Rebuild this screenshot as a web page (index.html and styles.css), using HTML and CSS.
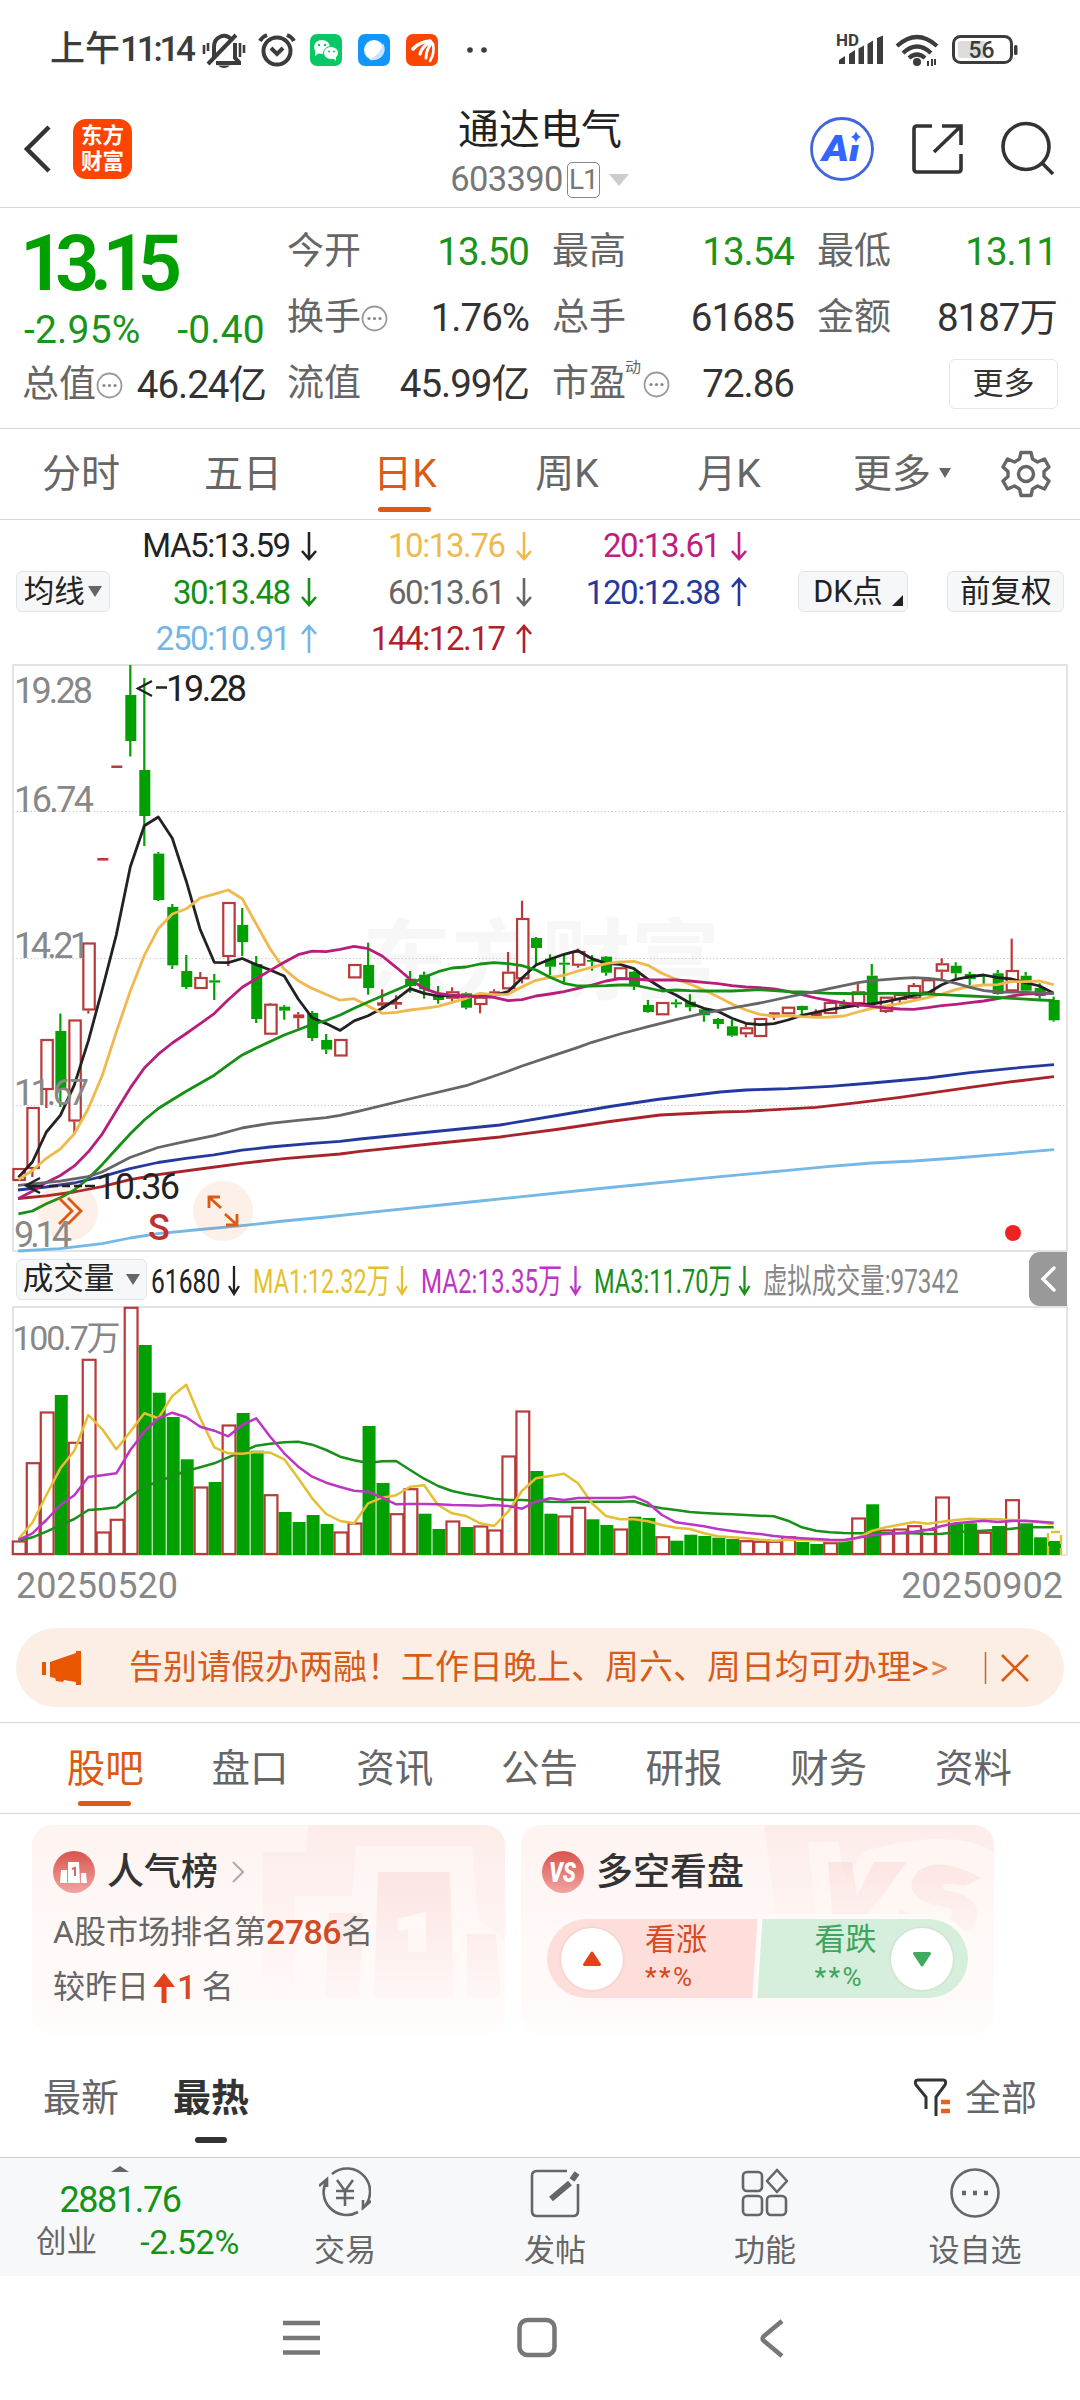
FILE: index.html
```html
<!DOCTYPE html>
<html lang="zh-CN">
<head>
<meta charset="utf-8">
<title>通达电气 603390</title>
<link rel="stylesheet" href="styles.css">
</head>
<body>
<div class="status">
  <span class="clock">上午<b>11:14</b></span>
  <svg class="st-left" width="300" height="60" viewBox="200 20 300 60">
    <g fill="none" stroke="#3c3c3c" stroke-width="4" stroke-linecap="butt">
      <path d="M214 57V47a10 11 0 0 1 17-8M235 43v15l4 4v1h-23M208 64L236 35"/>
      <path d="M204 45v9M208 43v8M240 43v14M244 45v8" stroke-width="2.6"/>
      <circle cx="277" cy="51" r="13.5"/>
      <path d="M271 48l6 6 6-6M260 41q2-4 7-6M294 41q-2-4-7-6" />
    </g>
    <path d="M218 65.500h12q-6 5-12 0z" fill="#3c3c3c"/>
    <rect x="310" y="34" width="32" height="32" rx="7" fill="#07c865"/>
    <ellipse cx="322" cy="47" rx="8" ry="7" fill="#fff"/><ellipse cx="331" cy="53" rx="7.500" ry="6.500" fill="#fff" stroke="#07c865"/>
    <path d="M315 51l0 5 4-3zM333 58l3 3 0-5z" fill="#fff"/>
    <g fill="#07c865"><circle cx="319" cy="45" r="1.200"/><circle cx="325" cy="45" r="1.200"/><circle cx="329" cy="51.500" r="1"/><circle cx="334" cy="51.500" r="1"/></g>
    <rect x="358" y="34" width="32" height="32" rx="7" fill="#1296fb"/>
    <circle cx="374" cy="50" r="10" fill="#fff"/><path d="M383 43q4 8-1 13-5 5-13 4 12-6 14-17z" fill="#c4e4ff"/>
    <rect x="406" y="34" width="32" height="32" rx="7" fill="#fd4503"/>
    <g fill="none" stroke="#fff" stroke-linecap="round"><path d="M413 49q6-7 17-8" stroke-width="3.600"/><path d="M420 54q2-8 11-12" stroke-width="3.200"/><path d="M426 58q0-9 6-15" stroke-width="3"/><path d="M430 61q5-8 3-17" stroke-width="2.600"/></g>
    <circle cx="470" cy="50" r="2.800" fill="#3c3c3c"/><circle cx="484" cy="50" r="2.800" fill="#3c3c3c"/>
  </svg>
  <svg class="st-right" width="190" height="60" viewBox="830 20 190 60">
    <text x="836" y="46" class="hd" textLength="23" lengthAdjust="spacingAndGlyphs">HD</text>
    <g fill="#3c3c3c"><path d="M839 60l6-4v8h-6zM849 54l6-4v14h-6zM858.500 48.500l5.500-3v18.500h-5.500zM867.500 44l5.500-3.500V64h-5.500zM877 38l6-2.500V64h-6z"/>
    <circle cx="917" cy="62" r="4"/></g>
    <g fill="none" stroke="#3c3c3c" stroke-width="4.200"><path d="M897 46q20-18 40 0M903 53q14-13 28 0M909 58q8-7 16 0"/><path d="M928 61v5M932 59v7M935 59v6" stroke-width="2"/></g>
    <rect x="953.500" y="36.500" width="58" height="26" rx="7" fill="none" stroke="#3c3c3c" stroke-width="3"/>
    <rect x="958" y="41" width="28" height="17" rx="3" fill="#dcdcdc"/><rect x="1014" y="45" width="3.500" height="10" rx="1.500" fill="#3c3c3c"/>
    <text x="968.500" y="58" class="batt" textLength="26" lengthAdjust="spacingAndGlyphs">56</text>
  </svg>
</div>

<header class="header">
  <svg width="27" height="50" viewBox="0 0 27 50" class="back"><path d="M25 3L3 25l22 22" fill="none" stroke="#333" stroke-width="4.500"/></svg>
  <div class="logo"><span>东方</span><span>财富</span></div>
  <div class="title">
    <h1>通达电气</h1>
    <div class="code"><span>603390</span><i>L1</i><u></u></div>
  </div>
  <svg class="tools" width="250" height="70" viewBox="810 114 250 70">
    <circle cx="842" cy="149" r="30.500" fill="none" stroke="#4065dc" stroke-width="2.800"/>
    <text x="822" y="161" class="ai" textLength="38" lengthAdjust="spacingAndGlyphs">Ai</text>
    <path d="M849 129h14v16h-14z" fill="#fff"/>
    <path d="M856 131q1 4.500 5 6-4 1-5 6-1-5-5-6 4-1.500 5-6z" fill="#3366ff"/>
    <g fill="none" stroke="#333" stroke-width="3.600"><path d="M932 126h-15q-3 0-3 3v40q0 3 3 3h41q3 0 3-3v-15M942 126h19v19M961 126l-27 26"/>
    <circle cx="1026" cy="146.500" r="23"/><path d="M1042 163l11 11"/></g>
  </svg>
</header>

<section class="quote">
  <div class="main">
    <div class="price">13.15</div>
    <div class="pair change down"><span>-2.95%</span><span>-0.40</span></div>
    <div class="pair"><label>总值</label><svg class="more-dot"><use href="#dots"/></svg><span>46.24亿</span></div>
  </div>
  <div class="col"><div><label>今开</label><span class="down">13.50</span></div><div><label>换手</label><svg class="more-dot"><use href="#dots"/></svg><span>1.76%</span></div><div><label>流值</label><span>45.99亿</span></div></div>
  <div class="col"><div><label>最高</label><span class="down">13.54</span></div><div><label>总手</label><span>61685</span></div><div><label>市盈<sup>动</sup></label><svg class="more-dot"><use href="#dots"/></svg><span>72.86</span></div></div>
  <div class="col"><div><label>最低</label><span class="down">13.11</span></div><div><label>金额</label><span>8187万</span></div><div class="end"><button class="more">更多</button></div></div>
</section>
<svg class="defs"><defs><g id="dots"><circle cx="13.500" cy="13.500" r="12" fill="none" stroke="#999" stroke-width="1.800"/><circle cx="8" cy="13.500" r="1.600" fill="#888"/><circle cx="13.500" cy="13.500" r="1.600" fill="#888"/><circle cx="19" cy="13.500" r="1.600" fill="#888"/></g></defs></svg>

<nav class="periods">
  <a>分时</a><a>五日</a><a class="on">日K</a><a>周K</a><a>月K</a><a>更多<i class="tri"></i></a>
  <svg width="108" height="60" viewBox="-54 -30 108 60"><path id="gear" fill="none" stroke="#666" stroke-width="3.400" stroke-linejoin="round" d="M-5-21.500h10l1.500 6.500 5 3 7-3 4.500 8-5 4.500v5l5 4.500-4.500 8-7-3-5 3-1.500 6.500h-10l-1.500-6.500-5-3-7 3-4.500-8 5-4.500v-5l-5-4.500 4.500-8 7 3 5-3z"/><circle r="7.500" fill="none" stroke="#666" stroke-width="3.400"/></svg>
</nav>

<section class="averages">
  <button class="chip line">均线<i class="tri"></i></button>
  <div class="ma-grid">
    <span class="c5">MA5:13.59<svg class="arr"><use href="#dn"/></svg></span><span class="c10">10:13.76<svg class="arr"><use href="#dn"/></svg></span><span class="c20">20:13.61<svg class="arr"><use href="#dn"/></svg></span>
    <span class="c30">30:13.48<svg class="arr"><use href="#dn"/></svg></span><span class="c60">60:13.61<svg class="arr"><use href="#dn"/></svg></span><span class="c120">120:12.38<svg class="arr"><use href="#up"/></svg></span>
    <span class="c250">250:10.91<svg class="arr"><use href="#up"/></svg></span><span class="c144">144:12.17<svg class="arr"><use href="#up"/></svg></span>
  </div>
  <button class="chip dk">DK点<i></i></button>
  <button class="chip fq">前复权</button>
</section>
<svg class="defs"><defs><path id="dn" d="M8 1v27M1 20l7 8 7-8" fill="none" stroke="currentColor" stroke-width="2.600"/><path id="up" d="M8 29V2M1 10l7-8 7 8" fill="none" stroke="currentColor" stroke-width="2.600"/></defs></svg>

<svg class="kline" width="1080" height="588" viewBox="0 664 1080 588">
  <text class="watermark" x="362" y="992" textLength="358" lengthAdjust="spacingAndGlyphs">东方财富</text>
  <path d="M13 811.500H1067M13 958.500H1067M13 1105.500H1067" stroke="#ccc" stroke-dasharray="1.500 2"/>
  <path d="M13 1251V665H1067V1251z" fill="none" stroke="#e3e3e3" stroke-width="2"/>
  <g id="candles"></g>
  <g id="averages" fill="none" stroke-width="2.800" stroke-linejoin="round"></g>
  <g fill="#ee6a20" fill-opacity=".1"><circle cx="68" cy="1211" r="30"/><circle cx="223" cy="1211" r="30"/></g>
  <g fill="none" stroke="#dc5a14" stroke-width="2.800"><path d="M59 1198l13 13-13 13M68 1198l13 13-13 13M209 1208v-11h11M210 1198l11 10M237 1214v11h-11M236 1224l-11-10"/></g>
  <text x="148" y="1240" class="sell">S</text>
  <circle cx="1013" cy="1233" r="8" fill="#ee2222"/>
  <g class="axis">
    <text x="14" y="702.500" textLength="79">19.28</text><text x="14" y="812" textLength="80">16.74</text><text x="14" y="958" textLength="76">14.21</text><text x="14" y="1105" textLength="75">11.67</text><text x="14" y="1247" textLength="58">9.14</text>
  </g>
  <g class="note">
    <path d="M152 681l-14 7.500 14 7.500M156 687.500h11M40 1178l-14 7.500 14 7.500M27 1186h16M49 1186h9M62 1186h8M74 1186h8M85 1186h10" fill="none" stroke="#222" stroke-width="2.400"/>
    <text x="166" y="701" textLength="81">19.28</text><text x="96" y="1199" textLength="84">10.36</text>
  </g>
</svg>

<section class="vol-head">
  <button class="chip vol">成交量<i class="tri"></i></button>
  <svg width="850" height="54" viewBox="150 1252 850 54" class="vol-legend">
    <text transform="translate(151 1292.500) scale(.725 1)" fill="#222">61680</text>
    <text transform="translate(253 1292.500) scale(.69 1)" fill="#e7c02f">MA1:12.32万</text>
    <text transform="translate(421 1292.500) scale(.71 1)" fill="#bd35c4">MA2:13.35万</text>
    <text transform="translate(594 1292.500) scale(.695 1)" fill="#1a8f1a">MA3:11.70万</text>
    <text transform="translate(763 1292.500) scale(.716 1)" fill="#888">虚拟成交量:97342</text>
    <g fill="none" stroke-width="2.300"><path d="M234 1266v28M229 1286l5 8 5-8" stroke="#222"/><path d="M402 1266v28M397 1286l5 8 5-8" stroke="#e7c02f"/><path d="M575.500 1266v28M570.500 1286l5 8 5-8" stroke="#bd35c4"/><path d="M744.500 1266v28M739.500 1286l5 8 5-8" stroke="#1a8f1a"/></g>
  </svg>
  <div class="toggle"><svg width="18" height="26" viewBox="0 0 18 26"><path d="M15 2L4 13l11 11" fill="none" stroke="#fff" stroke-width="3.400" stroke-linecap="round"/></svg></div>
</section>

<svg class="volume" width="1080" height="250" viewBox="0 1306 1080 250">
  <path d="M13 1555V1307H1067V1555z" fill="none" stroke="#e3e3e3" stroke-width="2"/>
  <g class="axis"><text x="12.500" y="1350" textLength="108">100.7万</text></g>
  <g id="bars"></g>
  <g id="volume-averages" fill="none" stroke-width="2.500" stroke-linejoin="round"></g>
</svg>
<div class="dates"><span>20250520</span><span>20250902</span></div>

<div class="banner">
  <svg width="40" height="36" viewBox="0 0 40 36"><path d="M0 12h4v13H0zM8 12l26-9V1h5v34h-5v-3l-12-2-1 2-7-1-1-3-5-1z" fill="#e85600"/></svg>
  <p>告别请假办两融！工作日晚上、周六、周日均可办理<b>&gt;</b><em>&gt;</em></p>
  <svg width="46" height="34" viewBox="0 0 46 34"><path d="M1.500 1v32" stroke="#d06020" stroke-width="1.500"/><path d="M18 4l26 26M44 4L18 30" stroke="#dc5a14" stroke-width="2.600"/></svg>
</div>

<nav class="tabs"><a class="on">股吧</a><a>盘口</a><a>资讯</a><a>公告</a><a>研报</a><a>财务</a><a>资料</a></nav>

<section class="cards">
  <article class="card">
    <svg class="art" width="473" height="209" viewBox="32 1825 473 209">
      <defs><linearGradient id="fade" x2="0" y2="1"><stop stop-color="#f7cfcc" stop-opacity=".42"/><stop offset="1" stop-color="#f7cfcc" stop-opacity=".08"/></linearGradient>
      <linearGradient id="badge" x2="0" y2="1"><stop stop-color="#d9534d"/><stop offset="1" stop-color="#f1a5a0"/></linearGradient></defs>
      <path d="M308 1825H505V1940L478 1920 472 1846H356L352 1896H295V2000H263V1852H306z" fill="url(#fade)" opacity=".5"/>
      <path d="M378 1872h72l4 125h-80zM329 1913h34l-4 84h-34zM467 1934h29l5 63h-34z" fill="url(#fade)"/>
      <path d="M398 1919l28-7v40h-18v-23l-10 2z" fill="#fff8f6"/>
    </svg>
    <div class="card-head">
      <svg width="42" height="42" viewBox="0 0 42 42"><circle cx="21" cy="21" r="21" fill="url(#badge)"/><path d="M8 19h6v13H7zM15 11h11l1 21H15zM28 22h5l1 10h-6z" fill="#fff"/><path d="M19 18l3-1v8" fill="none" stroke="#dc6761" stroke-width="2"/></svg>
      <h2>人气榜</h2>
      <svg width="13" height="22" viewBox="0 0 13 22"><path d="M1 1l10 10L1 21" fill="none" stroke="#aaa" stroke-width="2"/></svg>
    </div>
    <p class="rank">A股市场排名第<b>2786</b>名</p>
    <p class="rank">较昨日<svg width="22" height="30" viewBox="0 0 22 30"><path d="M11 0l11 14h-8.500v16h-5V14H0z" fill="#e0431a"/></svg><b>1</b><span>名</span></p>
  </article>
  <article class="card">
    <svg class="art" width="473" height="209" viewBox="521 1825 473 209">
      <path d="M764 1825H994V1905L970 1930H778z" fill="url(#fade)" opacity=".5"/>
      <path d="M808 1842h30l8 40 16-30q90-26 132 0v70l-80 12h-96z" fill="#fff7f5" opacity=".8"/>
      <path d="M828 1862h24l5 34 17-34h33l-46 62h-28zM982 1878q-55-28-70 2-6 22 38 28 4 6 0 12h-34l-16-12-10 26h70q22-10 16-28-10-14-32-16-6-10 20-4z" fill="url(#fade)"/>
    </svg>
    <div class="card-head">
      <svg width="42" height="42" viewBox="0 0 42 42"><circle cx="21" cy="21" r="21" fill="url(#badge)"/><text x="7" y="31" class="vs" textLength="27" lengthAdjust="spacingAndGlyphs">VS</text></svg>
      <h2>多空看盘</h2>
    </div>
    <div class="vote">
      <div class="side bull"><span class="knob"><svg width="20" height="16" viewBox="0 0 20 16"><path d="M10 2l7.500 11.500h-15z" fill="#e0431a" stroke="#e0431a" stroke-width="3" stroke-linejoin="round"/></svg></span><p>看涨<small><b>**</b>%</small></p></div>
      <div class="side bear"><p>看跌<small><b>**</b>%</small></p><span class="knob"><svg width="20" height="16" viewBox="0 0 20 16"><path d="M10 14L2.500 2.500h15z" fill="#3eab5f" stroke="#3eab5f" stroke-width="3" stroke-linejoin="round"/></svg></span></div>
    </div>
  </article>
</section>

<div class="sort">
  <a>最新</a><a class="on">最热</a>
  <div class="filter"><svg width="40" height="42" viewBox="0 0 40 42"><path d="M13 31V19L3 7q-2-5 2-5h25q4 0 2 5L23 19v19" fill="none" stroke="#333" stroke-width="3"/><path d="M28 24h9M28 33h9" stroke="#e8601c" stroke-width="4.500"/></svg>全部</div>
</div>

<footer class="bar">
  <div class="index"><i></i><strong>2881.76</strong><p><label>创业</label><span>-2.52%</span></p></div>
  <a><svg viewBox="-26 -26 52 52"><path d="M-13-19A23 23 0 0 1 17 16M13 19A23 23 0 0 1-18-13M-26-7l8-7v8M26 8l-8 7v-8M-8-13L0-2 8-13M0-2v15M-9-2H9M-9 5H9"/></svg>交易</a>
  <a><svg viewBox="-26 -26 52 52"><path d="M12-22H-18q-5 0-5 5V18q0 5 5 5H18q5 0 5-5V-9"/><path d="M22-20L17-13M15-10L-4 6" stroke-width="6"/></svg>发帖</a>
  <a><svg viewBox="-26 -26 52 52"><rect x="-22" y="-21" width="19" height="19" rx="4"/><rect x="-22" y="3" width="19" height="19" rx="4"/><rect x="2" y="3" width="19" height="19" rx="4"/><path d="M12-23l10 11-10 11L2-12z" stroke-linejoin="round"/></svg>功能</a>
  <a><svg viewBox="-26 -26 52 52"><circle r="23.500"/><path d="M-13 0h4M-2 0h4M9 0h4" stroke-width="4.500"/></svg>设自选</a>
</footer>
<div class="system">
  <svg width="1080" height="124" viewBox="0 2276 1080 124" fill="none" stroke="#777" stroke-width="4.500"><path d="M283 2323h37M283 2338h37M283 2352.500h37"/><rect x="519.500" y="2320" width="35" height="35" rx="8"/><path d="M782 2321l-18 15q-3 2.500 0 5l18 15"/></svg>
</div>
<script src="chart.js"></script>
</body>
</html>
```
FILE: styles.css
```css
* { box-sizing: border-box; margin: 0; padding: 0; }
body { width: 1080px; height: 2400px; overflow: hidden; background: #fff; color: #333; font-family: Roboto, "Noto Sans CJK SC", sans-serif; line-height: 1.2; display: flex; flex-direction: column; }
svg { display: block; flex: none; }
button { font-family: inherit; color: #222; }
i, em { font-style: normal; }
.defs { width: 0; height: 0; position: absolute; }

.status { height: 96px; padding: 20px 0 16px 50px; display: flex; align-items: center; flex: none; }
.clock { width: 150px; font-size: 35px; line-height: 62px; white-space: nowrap; color: #3c3c3c; font-weight: 500; }
.clock b { font-weight: 500; letter-spacing: -3.2px; }
.st-right { margin-left: 330px; }
.hd { font: 700 16px Roboto, sans-serif; fill: #3c3c3c; }
.batt { font: 500 23px Roboto, sans-serif; fill: #3c3c3c; }

.header { height: 112px; padding: 0 20px 5px 24px; border-bottom: 1px solid #d8d8d8; display: flex; align-items: center; flex: none; }
.logo { width: 59px; height: 60px; margin-left: 22px; border-radius: 13px; background: #fd4503; color: #fff; display: flex; flex-direction: column; align-items: center; justify-content: center; font-size: 21.5px; line-height: 26px; font-weight: 700; }
.title { width: 280px; margin-left: 268px; padding-top: 9px; display: flex; flex-direction: column; align-items: center; }
.title h1 { font-size: 41px; font-weight: 400; line-height: 52px; color: #222; }
.code { display: flex; align-items: center; height: 48px; margin-left: -1px; font-size: 34.5px; color: #777; letter-spacing: -.6px; }
.code i { width: 33px; height: 36px; border: 1.5px solid #888; border-radius: 5px; margin-left: 4px; font-size: 28px; line-height: 33px; text-align: center; letter-spacing: -1px; }
.code u { margin-left: 9px; border: 10px solid transparent; border-top: 12px solid #ccc; border-bottom: 0; }
.tools { margin-left: 130px; }
.ai { font: italic 900 36px Roboto, sans-serif; fill: #3366ff; }

.quote { height: 221px; padding: 11px 22px 0 24px; border-bottom: 1px solid #d8d8d8; display: flex; flex: none; font-size: 38.5px; letter-spacing: -1px; line-height: 66px; }
.main { width: 241px; margin-right: 22px; }
.price { height: 87px; line-height: 89px; font-size: 78px; font-weight: 600; color: #00a000; letter-spacing: -9.6px; margin-left: -4px; white-space: nowrap; }
.down { color: #1a941a; }
.pair { display: flex; height: 46px; align-items: center; white-space: nowrap; }
.pair + .pair { height: 66px; margin-left: -2px; margin-right: -1px; }
.pair > span:last-child { margin-left: auto; }
.change { font-size: 39px; letter-spacing: .2px; padding-top: 2px; }
.col { width: 242px; margin-right: 23px; }
.col div { height: 66px; display: flex; align-items: center; white-space: nowrap; }
.col span { margin-left: auto; }
.quote label { font-size: 37px; color: #666; letter-spacing: 0; position: relative; }
.quote sup { font-size: 16px; position: absolute; left: 73px; top: 5px; line-height: 24px; }
.more-dot { width: 27px; height: 27px; }
.col:nth-child(3) .more-dot { margin-left: 17px; }
.col .more { margin-left: auto; margin-right: -1px; width: 109px; height: 50px; border: 1.5px solid #e6e6e6; border-radius: 6px; background: #fff; font-size: 31px; line-height: 44px; color: #333; }
.col:last-child { width: 240px; margin-right: 0; }

.periods { height: 91px; border-bottom: 1px solid #d8d8d8; display: flex; align-items: center; flex: none; font-size: 39px; color: #666; }
.periods a { width: 162px; height: 90px; line-height: 90px; text-align: center; white-space: nowrap; }
.periods a:nth-child(6) { padding-left: 22px; }
.periods .tri { margin-left: 8px; border-width: 10px 6.5px 0; position: relative; top: -9px; }
.on { position: relative; color: #dc5a14; }
.on::after { content: ""; position: absolute; left: 50%; margin-left: -27px; width: 53px; height: 5px; border-radius: 3px; background: #dc5a14; bottom: 7px; }
.tri { display: inline-block; border: solid transparent; border-top-color: #666; border-width: 11px 7px 0; }

.averages { height: 144px; padding: 0 16px; display: flex; align-items: center; flex: none; }
.chip { height: 41px; padding: 0; border: 1.5px solid #e2e4e8; border-radius: 6px; background: #f6f7f9; font-size: 30.5px; line-height: 38px; display: flex; align-items: center; justify-content: center; white-space: nowrap; }
.averages .chip { margin-top: -1px; }
.line { width: 94px; }
.line .tri { margin-left: 3px; }
.ma-grid { width: 637px; display: grid; grid-template-columns: 207px 215px 215px; grid-auto-rows: 46.3px; font-size: 33px; letter-spacing: -1.4px; }
.ma-grid span { display: flex; justify-content: flex-end; align-items: center; white-space: nowrap; padding-top: 1px; padding-right: 6px; margin-right: -6px; }
.ma-grid span { padding-right: 6px; }
.arr { width: 16px; height: 30px; margin-left: 11px; }
.c5 { color: #222; } .c10 { color: #efb94e; } .c20 { color: #c01d80; } .c30 { color: #149014; } .c60 { color: #666; } .c120 { color: #24399f; } .c250 { color: #73b6e6; } .c144 { color: #b3202a; }
.dk { width: 111px; margin-left: 51px; position: relative; padding-right: 10px; }
.dk i { position: absolute; right: 4px; bottom: 5px; border-left: 11px solid transparent; border-bottom: 11px solid #222; }
.fq { width: 117px; margin-left: 39px; }

.kline { overflow: visible; }
.axis text { font: 36px Roboto, "Noto Sans CJK SC", sans-serif; fill: #888; }
.volume .axis text { font-size: 34px; }
.note text { font: 36px Roboto, sans-serif; fill: #222; }
.sell { font: 500 36px Roboto, sans-serif; fill: #c03030; }
.watermark { font: 700 88px "Noto Sans CJK SC", sans-serif; fill: #f7f7f7; }

.vol-head { height: 54px; padding: 0 13px 0 16px; display: flex; align-items: center; flex: none; }
.vol { width: 131px; }
.vol .tri { margin-left: 12px; border-width: 11px 7px 0; }
.vol-legend { margin-left: 3px; }
.vol-legend text { font: 34px Roboto, "Noto Sans CJK SC", sans-serif; }
.toggle { width: 38px; height: 54px; margin-left: auto; background: #999; border-radius: 11px 0 0 11px; display: flex; align-items: center; justify-content: center; }
.dates { height: 72px; padding: 2px 17px 0 16px; display: flex; justify-content: space-between; flex: none; font-size: 36px; line-height: 56px; color: #888; }

.banner { height: 79px; margin: 0 16px 15px; padding: 0 34px 0 26px; border-radius: 40px; background: #fceee5; display: flex; align-items: center; flex: none; font-size: 34px; color: #d65c1a; white-space: nowrap; }
.banner p { margin-left: 47px; margin-top: -1px; width: 840px; }
.banner b, .banner em { font-weight: 400; letter-spacing: 1.5px; }
.banner em { opacity: .7; }
.banner svg:last-child { margin-left: auto; }

.tabs { height: 92px; padding-left: 33px; border-top: 1px solid #d8d8d8; border-bottom: 1px solid #d8d8d8; display: flex; flex: none; font-size: 38.5px; color: #666; }
.tabs a { width: 144.7px; line-height: 91px; text-align: center; }

.cards { display: flex; gap: 16px; padding: 11px 32px 0; height: 220px; flex: none; }
.card { width: 473px; height: 209px; padding: 26px 21px; border-radius: 20px; overflow: hidden; position: relative; background: linear-gradient(#fef4f2, #fffcfb); }
.art { position: absolute; left: 0; top: 0; }
.card > * + * { position: relative; }
.card-head { display: flex; align-items: center; height: 42px; }
.card h2 { font-size: 37px; font-weight: 500; line-height: 44px; margin: 1px 14px 0 12px; }
.rank { display: flex; align-items: center; height: 55px; font-size: 32px; color: #666; white-space: nowrap; }
.card-head + .rank { margin-top: 12px; }
.rank b { color: #d24a24; font-size: 34px; font-weight: 500; letter-spacing: -.5px; }
.rank svg { margin: 0 2px 0 4px; }
.rank span { margin-left: 6px; }
.vs { font: italic 900 27px Roboto, sans-serif; fill: #fff; }
.vote { display: flex; width: 431px; height: 89px; margin: 21px 0 0 0; border: 5px solid #fffaf9; border-radius: 45px; overflow: hidden; background: #fffaf9; }
.side { height: 79px; display: flex; align-items: center; }
.bull { width: 211px; padding-left: 14px; background: #fddedb; clip-path: polygon(0 0, 100% 0, 97.6% 100%, 0 100%); color: #d84a20; }
.bear { width: 211px; padding-left: 57px; background: #d6efdc; clip-path: polygon(2.4% 0, 100% 0, 100% 100%, 0 100%); color: #3ea55f; }
.knob { width: 62px; height: 62px; border-radius: 50%; background: #fff; display: flex; align-items: center; justify-content: center; box-shadow: 0 0 3px rgba(150, 60, 50, .2); }
.side p { font-size: 31px; line-height: 39px; margin-top: -2px; }
.side small { display: block; font-size: 26px; line-height: 36px; }
.side small b { font-weight: 500; letter-spacing: 2.5px; }
.bull p { margin-left: 22px; }
.bear .knob { margin-left: 15px; }

.sort { height: 123px; padding: 0 43px; display: flex; flex: none; font-size: 38px; line-height: 128px; color: #666; }
.sort a { height: 123px; }
.sort a + a { margin-left: 54px; }
.sort .on { color: #333; font-weight: 700; }
.sort .on::after { width: 32px; margin-left: -16px; background: #333; bottom: 14px; height: 6px; }
.filter { margin-left: auto; display: flex; align-items: center; gap: 12px; font-size: 36px; height: 129px; }

.bar { height: 119px; border-top: 1px solid #d0d0d0; background: #f7f8fa; display: flex; flex: none; }
.index { width: 240px; display: flex; flex-direction: column; align-items: center; color: #149414; }
.index i { margin-top: 8px; border: 9px solid transparent; border-bottom: 6px solid #666; border-top: 0; }
.index strong { font-size: 36px; font-weight: 400; line-height: 57px; letter-spacing: -1.4px; }
.index p { display: flex; justify-content: space-between; width: 203px; font-size: 34px; line-height: 34px; margin: -4px 0 0 36px; align-self: flex-start; white-space: nowrap; letter-spacing: -.3px; }
.index label { font-size: 30.5px; color: #666; letter-spacing: 0; }
.bar a { width: 210px; display: flex; flex-direction: column; align-items: center; font-size: 31px; color: #666; line-height: 61px; }
.bar a svg { width: 52px; height: 52px; margin: 9px 0 1px; fill: none; stroke: #666; stroke-width: 2.6; }
```
FILE: chart.js
```js
const NS = 'http://www.w3.org/2000/svg';
const STEP = 13.99;
const x = i => 18.4 + STEP * i;
const UP = '#b83a3a', DOWN = '#00a000';

function add(parent, tag, attrs) {
  const el = document.createElementNS(NS, tag);
  for (const k in attrs) el.setAttribute(k, attrs[k]);
  parent.appendChild(el);
}

// direction, high, body top, body bottom, low
const candles = `r 1168 1168 1181 1181|r 1107 1107 1169 1177|r 1039 1039 1090 1108|g 1013.6 1031 1089 1107|r 1019.5 1019.5 1121.5 1134.5|r 942.5 942.5 1010.5 1013.6|r 858 858 860.6 860.6|r 765.5 765.5 768 768|g 665 695 741 756.5|g 678 770 816 846|g 852 853.6 900 901|g 904 907 965.4 969|g 955 971 987 989|r 972 977 989 989|g 974 980.3 982.6 1000|r 902 902 957 966|g 908 925 942 956|g 956 964 1019 1023|r 1003 1003.7 1034.7 1034.7|g 1005 1006.7 1010.6 1019.7|r 1012 1014.4 1018.2 1028.5|g 1011 1013 1038 1041|g 1034 1040 1049.6 1054|r 1039 1039 1056.5 1056.5|r 964 964 978.4 978.4|g 942.7 965 988 994.7|r 989.3 1002.3 1005.7 1009.3|r 995.3 1002 1004.7 1009|g 971 978.7 986 992.7|g 971.7 974.7 989.3 998.7|g 986 995.3 1000 1003.7|r 987.3 991.3 998.7 1001.3|g 992.3 993.3 1007.7 1009.3|r 996.7 996.7 1005 1013.3|r 989.3 991.3 994 996.7|r 952 971.7 989.3 989.3|r 900.7 918 979.3 983.3|g 937 938 948 965|g 954.3 958.7 966.7 975.3|g 954 962.7 964.7 982|r 948.7 951 965.7 967.7|g 955 960 961.7 970.7|g 956 956.7 972.7 975.7|r 967.3 967.3 979.3 979.3|g 970.7 971.7 986.3 990|g 1000 1005 1012 1012.7|r 1002 1002 1015.3 1015.3|g 999.3 1002.3 1004.3 1007.7|g 994.3 1001.7 1007.3 1011.3|g 1008 1009.3 1015.3 1021.7|g 1018 1019 1024 1028.7|g 1020 1026.3 1035.7 1036.7|r 1023.3 1027.3 1034.3 1037.3|r 1018 1018 1037 1037|r 1012 1012.3 1017.3 1020|r 1006.7 1006.7 1014.3 1016.7|g 1005.7 1006 1010 1015.3|r 1009.3 1012.3 1016.7 1016.7|r 1002 1002 1014 1014|g 999.7 1004.3 1006 1009|r 983.3 991.3 1004 1008|g 964 975.7 1003.3 1003.3|r 996.7 996.7 1012 1013|r 993 994 1000 1003.3|r 983 985 998.7 998.7|r 979.3 979.3 993.3 993.3|r 958.3 963.3 971.7 980|g 962.3 965.7 973.3 978.3|g 971.7 974 979 986|g 974 975 976.7 984.7|g 970 973.3 994 994.7|r 938.7 970 991.3 991.3|g 972 975.7 990.7 991.3|g 983.3 988 996 998.7|g 996.7 1000 1020.3 1021.7`;

const layer = document.getElementById('candles');
candles.split('|').forEach((row, i) => {
  const [dir, ...v] = row.split(' ');
  const [high, top, bottom, low] = v.map(Number);
  const color = dir === 'r' ? UP : DOWN, h = bottom - top;
  if (high < top) add(layer, 'rect', {x: x(i) - 1.1, y: high, width: 2.2, height: top - high, fill: color});
  if (low > bottom) add(layer, 'rect', {x: x(i) - 1.1, y: bottom, width: 2.2, height: low - bottom, fill: color});
  if (dir === 'r' && h > 5.5) add(layer, 'rect', {x: x(i) - 5, y: top + 1, width: 11.4, height: h - 2, fill: '#fff', stroke: color, 'stroke-width': 2.2});
  else add(layer, 'rect', {x: x(i) - 5, y: top, width: 11, height: h, fill: color});
});

function line(parent, points, color) {
  add(parent, 'polyline', {points: points.map(p => p.join()).join(' '), stroke: color});
}
const ma = document.getElementById('averages');
const daily = (text, color) => line(ma, text.split(' ').map((y, i) => [x(i), y]), color);
const sparse = (text, color) => line(ma, text.split(' ').map(p => p.split(',')), color);

sparse('18,1251 60,1248.600 102,1243.600 130,1238 158,1233.700 200,1229.500 242,1225.600 284,1221 326,1217 360,1213.400 480,1201 600,1188.500 720,1176.700 788,1170.300 830,1166.300 872,1163 914,1161 956,1158 1012,1153.300 1054,1149.700', '#73b8e6');
sparse('18,1198.500 46,1195.800 74,1192 102,1186.600 130,1179.700 158,1174.700 200,1169 242,1163.300 284,1158.700 340,1154 360,1151.400 430,1144 500,1137 560,1129 610,1121.500 660,1115 720,1112 746,1111.300 816,1107.300 858,1102.700 900,1097.300 928,1093.300 970,1087.300 1012,1081.700 1054,1076.700', '#a8242a');
sparse('18,1190 46,1187 74,1183 102,1176.600 130,1168.600 158,1162.500 186,1158.300 214,1154.800 242,1150.200 270,1147 312,1143.300 340,1141.400 360,1139 430,1132 500,1125 560,1115 610,1106.500 657,1099.500 720,1092 746,1090 788,1088.700 830,1086.300 872,1083 928,1078 970,1072.700 1012,1068.300 1054,1064.700', '#24399f');
daily('1177.4 1162 1132 1115.4 1084.8 1040.8 989 934.8 866.7 825.7 817 838.3 881.2 929.8 962.3 962.7 958.5 964.6 970 976 999 1017.8 1023.6 1030.4 1020.9 1015.7 1008.3 999.3 988.7 993.3 996 995.3 996.7 996 995.3 991.7 978 965 959.3 954.3 950.7 958.7 963.3 964.3 968.7 979.3 988.3 995 1003 1008.3 1011.3 1018.3 1023.3 1024.7 1023.7 1020 1015.3 1012.3 1009.3 1007.3 1005 1004 1001.7 998.7 995.3 993.3 984.7 979.3 976.7 975 977.7 979 982.7 986 993.3', '#222');
daily('1179.7 1170.5 1158.3 1149 1133.8 1108.5 1075.2 1032 991 955.4 928.7 914 908.8 898 894.2 890 898.8 924 949 969.2 980.7 988.4 994.5 1000.2 998.7 1006 1013.3 1012.3 1010 1008.3 1006.3 1002.3 998.3 993.3 994.7 994.3 986.7 980.3 977.3 975.3 971 967.3 963.7 962 961.3 965.3 973.3 979.3 984 990 996.7 1004 1010 1014.3 1016 1015.7 1016.7 1017.3 1017 1016 1012 1008.3 1006 1003.7 1000.7 997.7 994 989.7 986.3 985 984.7 981.7 981.7 981 984.7', '#efb94e');
daily('1198.5 1191.2 1182.4 1175.5 1165.9 1151.8 1133.8 1110.8 1087.9 1068 1054.2 1043 1033.5 1023.6 1013.6 999.8 987.2 978.8 970.4 962.3 954.7 951.2 951.6 949.3 946.3 948.7 956 967.3 979.3 988.7 993.3 995.3 996 996.7 997.3 1000.7 999.7 996 994 991.7 988.3 985 981 978.7 979 980 980 980 981 982.3 983.7 985.7 987 987.7 989 991.3 994.7 998 1000.7 1003 1004.7 1006.3 1008 1009 1009.3 1007.7 1005.7 1004.3 1002.7 1001 998.7 996 994 993.3 993.3', '#b91d7c');
daily('1213.8 1211 1203.8 1197.7 1190 1178.5 1164.4 1149 1133.8 1120 1108.5 1099.7 1091.3 1083.3 1075.2 1064.9 1054.9 1048 1041.5 1035 1029.7 1024.3 1020.5 1015 1008.3 1002 996 990 984 977.3 971.7 968 967 964 962.7 963.7 965.7 970 977.3 983.3 986 986 985.7 985 985 988 991 990 990.7 991 991 991 990.3 989.7 990.7 991.7 992 992.7 993.3 993.5 993.7 993.5 993.3 993.3 993.3 994 994.6 995.3 996 996.7 997.5 998.3 999.2 1000 1000.7', '#149014');
sparse('18,1185.400 60,1181.200 88,1176.600 102,1172 130,1157.500 158,1147.500 186,1141.400 214,1135.700 242,1128 270,1123.400 298,1120.400 326,1117.700 340,1115.400 360,1110.800 405,1100 466,1085.700 508,1071.300 522,1066 550,1056.700 578,1047.300 592,1042.300 620,1034 648,1026.700 676,1019.700 704,1013 718,1010.700 732,1008 760,1003 788,997 816,991.300 858,982.700 872,980.700 900,978.300 914,977.700 928,978.300 942,980 956,983.300 970,987.300 984,990.700 998,992 1026,992.300 1054,993.300', '#666');

// direction followed by the top edge of each bar
const bars = 'r1541 r1462.7 r1412 g1395 r1442.3 r1359.3 r1532 r1519.3 r1307.3 g1345 g1392.7 g1417 g1459.3 r1487 g1482 r1425 g1413 g1450.7 r1494.7 g1512 g1522 g1515 g1524 r1532 r1523 g1426 g1483 r1513.7 r1488.7 g1513.7 g1529 r1521 g1527 r1526 r1530 r1456 r1411 g1471 g1513.7 r1516 r1507.3 g1519.3 g1525 r1529 g1516.7 g1518 r1536.7 g1540.7 g1534.7 g1536 g1537.7 g1539 r1540.7 r1541.3 r1541.3 r1536.7 g1542 g1544 r1542.7 g1541 r1518 g1504.3 r1530 r1529 r1525.7 r1529.3 r1497 g1524 g1523.3 r1532.3 g1526 r1499.7 g1523.3 g1537.3 g1541';
const barLayer = document.getElementById('bars');
bars.split(' ').forEach((b, i) => {
  const top = +b.slice(1);
  if (b[0] === 'r') add(barLayer, 'rect', {x: x(i) - 5.6, y: top + .5, width: 12.8, height: 1553.5 - top, fill: '#fff', stroke: UP, 'stroke-width': 2.2});
  else add(barLayer, 'rect', {x: x(i) - 5.6, y: top, width: 13, height: 1555 - top, fill: DOWN});
});
add(barLayer, 'path', {d: 'M1048 1555V1532H1061V1555', fill: 'none', stroke: '#e0c030', 'stroke-width': 2.4, 'stroke-dasharray': '9 4'});

// volume averages, in thirds of a pixel from the top of the volume block
const vma = document.getElementById('volume-averages');
const vol = (text, color) => line(vma, text.split(' ').map((v, i) => [x(i), (1240 + v / 3).toFixed(1)]), color);
vol('902 892 875 855 837 810 807 802 770 740 725 708 693 682 670 652 635 617 611 607 605 614 630 650 661 669 664 663 690 716 738 753 762 769 776 780 780 782 785 786 785 785 785 785 784 797 805 810 816 819 821 823 825 827 829 842 862 872 877 879 880 880 880 880 880 882 881 877 874 872 870 866 862 862 862', '#1a8f1a');
vol('897 848 765 685 632 525 568 628 575 520 535 468 434 535 622 640 641 636 638 658 715 775 822 843 850 790 773 766 740 736 795 820 828 850 858 815 752 715 708 701 730 790 828 838 838 844 855 863 867 880 889 892 895 899 902 900 900 901 903 903 893 873 862 854 846 851 845 840 836 838 838 840 843 847 853', '#e5bf33');
vol('900 880 840 795 766 711 706 700 630 575 535 518 532 560 572 589 555 535 590 640 680 710 728 741 752 755 773 793 792 792 793 795 796 797 795 798 806 785 775 780 774 774 774 774 770 788 825 847 853 859 867 873 878 882 888 892 895 897 899 900 893 886 882 879 875 870 858 850 846 842 846 843 842 845 848', '#bd35c4');
```
